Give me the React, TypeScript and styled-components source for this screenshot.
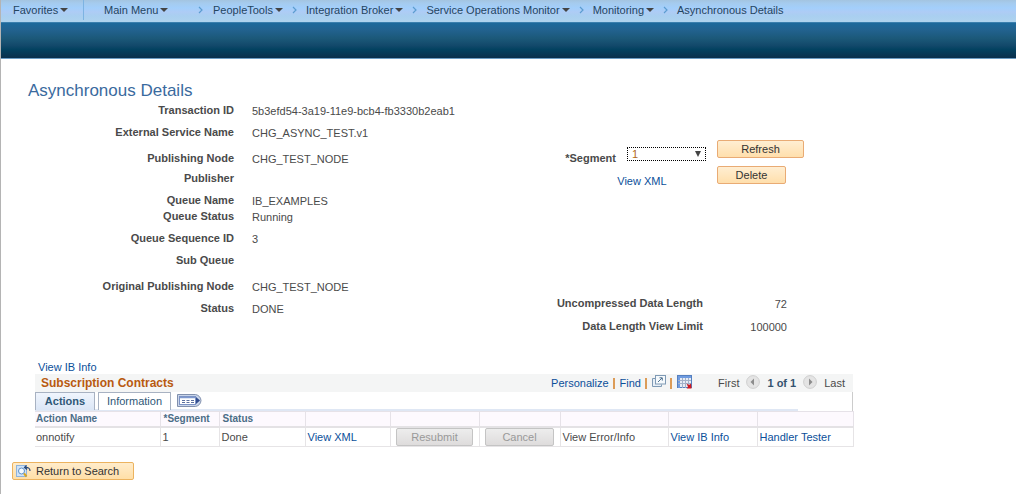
import React from "react";
import styled, { createGlobalStyle } from "styled-components";

const Global = createGlobalStyle`
  * { box-sizing: border-box; }
  body {
    margin: 0;
    background: #fff;
    color: #4a4a4a;
    font: 11px/16px "Liberation Sans", Arial, sans-serif;
  }
  button, select { font: inherit; }
`;

const Page = styled.div`
  min-height: 100vh;
  border-left: 1px solid #b4b4b4;
`;

const Breadcrumbs = styled.nav`
  display: flex;
  align-items: flex-start;
  height: 22px;
  padding-left: 12px;
  background: linear-gradient(#a3c4e0 0, #a5cbee 3px, #a3cffb 8px, #aeccf5 12px, #a9cff0 16px, #afd3ee 22px);
  white-space: nowrap;
`;

const Crumb = styled.a`
  display: inline-flex;
  align-items: center;
  gap: 2px;
  height: 20px;
  color: #24455f;
  text-decoration: none;
`;

const Favorites = styled.div`
  display: flex;
  width: 71px;
  height: 20px;
  margin-right: 20px;
  border-right: 1px solid #7db3e2;
`;

const MainMenu = styled.div`
  display: flex;
  width: 94px;
`;

const Caret = styled.span`
  border: 4px solid transparent;
  border-top-color: #444;
  border-bottom: 0;
`;

const Chevron = styled.svg`
  flex: none;
  width: 5px;
  height: 8px;
  margin: 6px 9px 0 9px;
`;

const FirstChevron = styled(Chevron)`
  margin-left: 0;
  margin-right: 10px;
`;

const Banner = styled.div`
  height: 37px;
  border-top: 1px solid #3a7fae;
  border-bottom: 1px solid #6a9cc4;
  background: linear-gradient(#1c699c 0, #22628f 20%, #1b5878 45%, #12486a 65%, #034261 75%, #0a2f4c 100%);
`;

const Title = styled.h1`
  margin: 0;
  padding: 21px 0 0 27px;
  font-size: 17px;
  line-height: 22px;
  font-weight: normal;
  color: #3a6a9e;
`;

const Details = styled.section`
  display: flex;
`;

const Fields = styled.dl`
  width: 540px;
  margin: 0;
`;

const Field = styled.div<{ $h: number }>`
  display: grid;
  grid-template-columns: 233px 1fr;
  column-gap: 18px;
  height: ${(p) => p.$h}px;
`;

const Term = styled.dt`
  font-weight: bold;
  text-align: right;
`;

const Value = styled.dd`
  margin: 0;
  line-height: 18px;
`;

const Side = styled.div`
  width: 263px;
  padding-top: 38px;
`;

const Controls = styled.div`
  display: flex;
  justify-content: flex-end;
  gap: 11px;
  height: 155px;
`;

const SegmentBox = styled.div`
  display: flex;
  flex-direction: column;
  padding-top: 7px;
`;

const SegmentRow = styled.div`
  display: flex;
  align-items: flex-start;
  gap: 11px;
  height: 26px;
`;

const SegmentLabel = styled.label`
  padding-top: 3px;
  font-weight: bold;
`;

const SelectWrap = styled.div`
  position: relative;
  display: flex;
`;

const Select = styled.select`
  appearance: none;
  width: 79px;
  height: 14px;
  padding: 0 4px;
  border: 1px dotted #000;
  border-radius: 0;
  outline: none;
  background: #fff;
  color: #b06a20;
  line-height: 12px;
`;

const SelectArrow = styled.span`
  position: absolute;
  top: 4px;
  right: 5px;
  border: 3px solid transparent;
  border-top: 6px solid #444;
  border-bottom: 0;
  pointer-events: none;
`;

const Link = styled.a`
  color: #0b4f9a;
  text-decoration: none;
`;

const SegmentLink = styled(Link)`
  padding-left: 52px;
`;

const Buttons = styled.div`
  display: flex;
  flex-direction: column;
  align-items: flex-start;
  gap: 8px;
  width: 87px;
`;

const Button = styled.button<{ $w: number }>`
  width: ${(p) => p.$w}px;
  height: 18px;
  padding: 0;
  border: 1px solid #e9ab74;
  border-radius: 2px;
  background: linear-gradient(#ffeed2, #ffdfac);
  color: #333;
  line-height: 16px;
`;

const GridButton = styled(Button)`
  display: block;
  margin: 0 auto;
  border-color: #c4c4c4;
  background: linear-gradient(#ededed, #dedcdc);
  color: #999;
`;

const Lengths = styled.dl`
  margin: 0;
`;

const LengthRow = styled.div`
  display: grid;
  grid-template-columns: 162px 84px;
  height: 23px;
`;

const Amount = styled(Value)`
  text-align: right;
`;

const Contracts = styled.section`
  max-width: 852px;
  padding: 18px 0 0 34px;
`;

const InfoLink = styled(Link)`
  display: block;
  width: 70px;
  padding-left: 3px;
`;

const Bar = styled.div`
  display: flex;
  align-items: center;
  height: 18px;
  margin-top: -1px;
  padding: 0 8px 0 6px;
  background: #f4f5f5;
`;

const BarTitle = styled.h2`
  flex: 1;
  margin: 0;
  font-size: 12px;
  line-height: 18px;
  color: #b85a10;
`;

const Tools = styled.div`
  display: flex;
  align-items: center;
  gap: 4px;
  width: 167px;
`;

const Sep = styled.span`
  width: 2px;
  height: 11px;
  margin-right: 1px;
  background: #dc9c58;
`;

const Pager = styled.div`
  display: flex;
  align-items: center;
  gap: 7px;
`;

const PageCount = styled.span`
  color: #35536f;
  font-weight: bold;
`;

const PageButton = styled.button`
  display: flex;
  width: 14px;
  height: 16px;
  padding: 0;
  border: 0;
  background: none;
`;

const ToolButton = styled.button<{ $w: number }>`
  display: flex;
  width: ${(p) => p.$w}px;
  height: 16px;
  padding: 0;
  border: 0;
  background: none;
`;

const Tabs = styled.div`
  display: flex;
  align-items: flex-start;
  gap: 3px;
  height: 19px;
  border-right: 1px solid #ccc;
  background: linear-gradient(#dfe7f4, #dfe7f4) 0 17px / calc(100% - 54px) 2px no-repeat;
`;

const Tab = styled.button<{ $active?: boolean; $w: number }>`
  width: ${(p) => p.$w}px;
  height: 18px;
  padding: 0;
  border: 1px solid #a8b2c2;
  border-bottom: 0;
  background: ${(p) => (p.$active ? "linear-gradient(#f0f5fd, #dbe6f6)" : "#fff")};
  color: #2f5877;
  font-weight: ${(p) => (p.$active ? "bold" : "normal")};
  line-height: 17px;
`;

const ShowAll = styled.button`
  display: flex;
  margin: 2px 0 0 3px;
  padding: 0;
  border: 0;
  background: none;
`;

const Table = styled.table`
  width: 100%;
  table-layout: fixed;
  border-collapse: collapse;
  white-space: nowrap;
`;

const Head = styled.th`
  height: 15px;
  padding: 0 1px 0 3px;
  border: 1px solid #e6e2e8;
  border-bottom: 2px solid #e4e2e5;
  background: #fdf9fe;
  color: #4b6d86;
  font-size: 10px;
  line-height: 13px;
  text-align: left;
  &:first-child { border-left: 0; padding-left: 1px; }
`;

const Cell = styled.td`
  height: 20px;
  padding: 0 2px;
  border: 1px solid #e6e4e6;
  line-height: 18px;
  &:first-child { border-left: 0; padding-left: 1px; }
`;

const Return = styled.button`
  display: flex;
  align-items: center;
  gap: 5px;
  height: 18px;
  margin: 15px 0 13px 11px;
  padding: 0 14px 0 3px;
  border: 1px solid #ecb35f;
  border-radius: 2px;
  background: linear-gradient(#ffeccb, #ffdfa8);
  color: #333;
`;

const fields: [string, string, number][] = [
  ["Transaction ID", "5b3efd54-3a19-11e9-bcb4-fb3330b2eab1", 22],
  ["External Service Name", "CHG_ASYNC_TEST.v1", 26],
  ["Publishing Node", "CHG_TEST_NODE", 20],
  ["Publisher", "", 22],
  ["Queue Name", "IB_EXAMPLES", 16],
  ["Queue Status", "Running", 22],
  ["Queue Sequence ID", "3", 22],
  ["Sub Queue", "", 26],
  ["Original Publishing Node", "CHG_TEST_NODE", 22],
  ["Status", "DONE", 26],
];

const columns: [string, number][] = [
  ["Action Name", 125],
  ["*Segment", 59],
  ["Status", 86],
  ["", 85],
  ["", 89],
  ["", 81],
  ["", 108],
  ["", 89],
  ["", 96],
];

const crumbs = ["PeopleTools", "Integration Broker", "Service Operations Monitor", "Monitoring"];

const chevronPath = <path d="M1 1l3 3-3 3" fill="none" stroke="#5c9cd0" strokeWidth="1.2" />;

function PageIcon({ back }: { back?: boolean }) {
  return (
    <svg width="14" height="14" viewBox="0 0 14 14">
      <circle cx="7" cy="7" r="6.4" fill="#e4e4e4" stroke="#cfcfcf" />
      <path d={back ? "M8 3.5v7L4.5 7z" : "M6 3.5v7L9.500 7z"} fill="#8c8c8c" />
    </svg>
  );
}

export default function App() {
  return (
    <Page>
      <Global />
      <Breadcrumbs aria-label="Breadcrumb">
        <Favorites>
          <Crumb href="#">Favorites<Caret /></Crumb>
        </Favorites>
        <MainMenu>
          <Crumb href="#">Main Menu<Caret /></Crumb>
        </MainMenu>
        <FirstChevron viewBox="0 0 5 8">{chevronPath}</FirstChevron>
        {crumbs.map((c) => (
          <React.Fragment key={c}>
            <Crumb href="#">{c}<Caret /></Crumb>
            <Chevron viewBox="0 0 5 8">{chevronPath}</Chevron>
          </React.Fragment>
        ))}
        <Crumb href="#">Asynchronous Details</Crumb>
      </Breadcrumbs>
      <Banner />
      <main>
        <Title>Asynchronous Details</Title>
        <Details>
          <Fields>
            {fields.map(([label, value, h]) => (
              <Field key={label} $h={h}>
                <Term>{label}</Term>
                <Value>{value}</Value>
              </Field>
            ))}
          </Fields>
          <Side>
            <Controls>
              <SegmentBox>
                <SegmentRow>
                  <SegmentLabel htmlFor="segment">*Segment</SegmentLabel>
                  <SelectWrap>
                    <Select id="segment" defaultValue="1">
                      <option>1</option>
                    </Select>
                    <SelectArrow />
                  </SelectWrap>
                </SegmentRow>
                <SegmentLink href="#">View XML</SegmentLink>
              </SegmentBox>
              <Buttons>
                <Button $w={87}>Refresh</Button>
                <Button $w={69}>Delete</Button>
              </Buttons>
            </Controls>
            <Lengths>
              <LengthRow>
                <Term>Uncompressed Data Length</Term>
                <Amount>72</Amount>
              </LengthRow>
              <LengthRow>
                <Term>Data Length View Limit</Term>
                <Amount>100000</Amount>
              </LengthRow>
            </Lengths>
          </Side>
        </Details>
        <Contracts>
          <InfoLink href="#">View IB Info</InfoLink>
          <Bar>
            <BarTitle>Subscription Contracts</BarTitle>
            <Tools>
              <Link href="#">Personalize</Link>
              <Sep />
              <Link href="#">Find</Link>
              <Sep />
              <ToolButton $w={14} aria-label="Open in new window">
                <svg width="14" height="12" viewBox="0 0 14 12">
                  <path d="M3.500 3.500h-3v8h9v-2" fill="#e8eff6" stroke="#7f9ab5" />
                  <rect x="3.500" y=".5" width="10" height="8.500" fill="#f5f9fc" stroke="#7f9ab5" />
                  <path d="M6 7l4-4M7.500 2.800H10.300V5.600" fill="none" stroke="#4f718f" />
                </svg>
              </ToolButton>
              <Sep />
              <ToolButton $w={16} aria-label="Download to spreadsheet">
                <svg width="16" height="14" viewBox="4 0 16 14">
                  <rect x="4.500" y=".5" width="14" height="12" fill="#e6ecf5" stroke="#5580c0" />
                  <path d="M5 2h13M6 1v12" stroke="#6f9be0" strokeWidth="2" />
                  <path d="M5 5.500h13M5 8.500h13M9.500 3v10M12.500 3v10M15.500 3v10" stroke="#a3b1c8" />
                  <path d="M13.500 8.500l2.500 1.500 2-1.500.5 5h-5l1.500-1.500z" fill="#d01820" />
                </svg>
              </ToolButton>
            </Tools>
            <Pager>
              <span>First</span>
              <PageButton aria-label="Previous"><PageIcon back /></PageButton>
              <PageCount>1 of 1</PageCount>
              <PageButton aria-label="Next"><PageIcon /></PageButton>
              <span>Last</span>
            </Pager>
          </Bar>
          <Tabs>
            <Tab $w={60} $active>Actions</Tab>
            <Tab $w={73}>Information</Tab>
            <ShowAll aria-label="Show all columns">
              <svg width="25" height="13" viewBox="0 0 25 13">
                <path d="M.5.5h18q5 1 5.500 6-.5 5-5.500 6H.5z" fill="#c9d5ea" stroke="#8190ad" />
                <rect x="2.500" y="2.500" width="16" height="8" fill="#fff" stroke="#7d93c4" />
                <path d="M3 3.500h15" stroke="#7f99cf" strokeWidth="1.500" />
                <path d="M5 6.500h12M5 8.500h12" stroke="#5a6f9f" strokeDasharray="3 1.500" />
                <path d="M19 3l4 3.500-4 3.500z" fill="#314d8f" />
              </svg>
            </ShowAll>
          </Tabs>
          <Table>
            <colgroup>
              {columns.map(([, w], i) => <col key={i} width={w} />)}
            </colgroup>
            <thead>
              <tr>
                {columns.map(([name], i) => <Head key={i} scope="col">{name}</Head>)}
              </tr>
            </thead>
            <tbody>
              <tr>
                <Cell>onnotify</Cell>
                <Cell>1</Cell>
                <Cell>Done</Cell>
                <Cell><Link href="#">View XML</Link></Cell>
                <Cell><GridButton $w={77} disabled>Resubmit</GridButton></Cell>
                <Cell><GridButton $w={69} disabled>Cancel</GridButton></Cell>
                <Cell>View Error/Info</Cell>
                <Cell><Link href="#">View IB Info</Link></Cell>
                <Cell><Link href="#">Handler Tester</Link></Cell>
              </tr>
            </tbody>
          </Table>
        </Contracts>
        <Return>
          <svg width="15" height="13" viewBox="0 0 15 13">
            <rect x=".5" y=".5" width="10" height="11" fill="#cfe2f7" stroke="#8fb4dc" />
            <circle cx="5.500" cy="6" r="3" fill="#f4faff" stroke="#5b8fc8" />
            <path d="M8 8.500l2.500 3" stroke="#d9a520" strokeWidth="2" />
            <path d="M14 6q0-4-5-3.500M10.500.5l-2 2 2.500 2" fill="none" stroke="#2b4a7a" strokeWidth="1.200" />
          </svg>
          Return to Search
        </Return>
      </main>
    </Page>
  );
}
